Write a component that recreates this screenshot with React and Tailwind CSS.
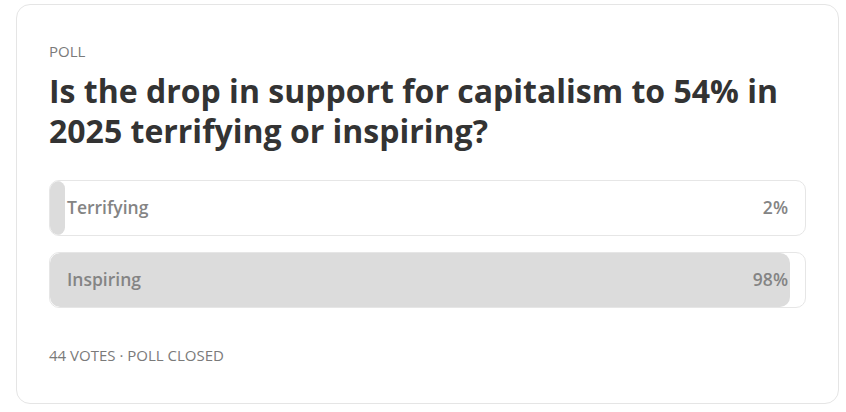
const options = [
  { label: "Terrifying", pct: 2 },
  { label: "Inspiring", pct: 98 },
];

function OptionRow({ opt }) {
  return (
    <div className="relative h-[56px] rounded-[10px] border border-[#e6e6e6] overflow-hidden">
      <div
        className="absolute left-0 top-0 bottom-0 bg-[#dcdcdc] rounded-[10px]"
        style={{ width: `${opt.pct}%` }}
      />
      <div className="relative flex h-full items-center justify-between px-[17px] pb-[1px] text-[17.5px] font-semibold text-[#848484]">
        <span>{opt.label}</span>
        <span>{opt.pct}%</span>
      </div>
    </div>
  );
}

export default function App() {
  return (
    <div className="min-h-screen bg-white pl-[16px] pt-[4px]" style={{ fontFamily: '"Open Sans", sans-serif' }}>
      <div className="w-[823px] h-[400px] rounded-[14px] border border-[#e5e5e5] px-[32px] pt-[36px]">
        <div className="text-[15px] leading-[20px] text-[#7a7a7a]">POLL</div>
        <h1 className="mt-[10px] text-[32px] leading-[40px] font-bold text-[#333333]">
          Is the drop in support for capitalism to 54% in 2025 terrifying or inspiring?
        </h1>
        <div className="mt-[29px] flex flex-col gap-[16px] w-[757px]">
          {options.map((o) => (
            <OptionRow key={o.label} opt={o} />
          ))}
        </div>
        <div className="mt-[37px] text-[15px] leading-[20px] font-medium text-[#7a7a7a]">
          44 VOTES · POLL CLOSED
        </div>
      </div>
    </div>
  );
}
